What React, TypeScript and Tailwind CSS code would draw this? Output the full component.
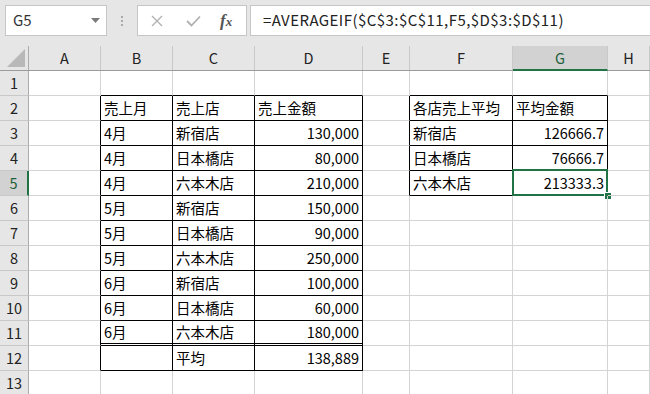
import clsx from "clsx";

const FONT = { fontFamily: '"Noto Sans CJK JP", "Noto Sans", sans-serif' };

// column widths including the right grid line
const COLS = [
  { key: "A", w: "w-[72px]" },
  { key: "B", w: "w-[72px]" },
  { key: "C", w: "w-[82px]" },
  { key: "D", w: "w-[108px]" },
  { key: "E", w: "w-[47px]" },
  { key: "F", w: "w-[103px]" },
  { key: "G", w: "w-[95px]" },
  { key: "H", w: "flex-1" },
];

type Cell = { v: string; right?: boolean };
const DATA: Record<number, Record<number, Cell>> = {
  2: { 1: { v: "売上月" }, 2: { v: "売上店" }, 3: { v: "売上金額" }, 5: { v: "各店売上平均" }, 6: { v: "平均金額" } },
  3: { 1: { v: "4月" }, 2: { v: "新宿店" }, 3: { v: "130,000", right: true }, 5: { v: "新宿店" }, 6: { v: "126666.7", right: true } },
  4: { 1: { v: "4月" }, 2: { v: "日本橋店" }, 3: { v: "80,000", right: true }, 5: { v: "日本橋店" }, 6: { v: "76666.7", right: true } },
  5: { 1: { v: "4月" }, 2: { v: "六本木店" }, 3: { v: "210,000", right: true }, 5: { v: "六本木店" }, 6: { v: "213333.3", right: true } },
  6: { 1: { v: "5月" }, 2: { v: "新宿店" }, 3: { v: "150,000", right: true } },
  7: { 1: { v: "5月" }, 2: { v: "日本橋店" }, 3: { v: "90,000", right: true } },
  8: { 1: { v: "5月" }, 2: { v: "六本木店" }, 3: { v: "250,000", right: true } },
  9: { 1: { v: "6月" }, 2: { v: "新宿店" }, 3: { v: "100,000", right: true } },
  10: { 1: { v: "6月" }, 2: { v: "日本橋店" }, 3: { v: "60,000", right: true } },
  11: { 1: { v: "6月" }, 2: { v: "六本木店" }, 3: { v: "180,000", right: true } },
  12: { 2: { v: "平均" }, 3: { v: "138,889", right: true } },
};

const inTable = (r: number, c: number) =>
  (c >= 1 && c <= 3 && r >= 2 && r <= 12) || (c >= 5 && c <= 6 && r >= 2 && r <= 5);

function Toolbar() {
  return (
    <div className="h-[46px] flex items-start pt-[5px] bg-[#e6e6e6]">
      {/* name box */}
      <div className="ml-[5px] w-[102px] h-[31px] bg-white border border-[#c6c6c6] flex items-center justify-between pl-[7px] pr-[6px]">
        <span className="text-[15px] text-[#333]">G5</span>
        <svg width="9" height="5" viewBox="0 0 9 5">
          <path d="M0 0h9L4.5 5z" fill="#7a7a7a" />
        </svg>
      </div>
      <div className="w-[30px] h-[31px] flex flex-col items-center justify-center gap-[2px]">
        <span className="w-[2px] h-[2px] bg-[#aaa]" />
        <span className="w-[2px] h-[2px] bg-[#aaa]" />
        <span className="w-[2px] h-[2px] bg-[#aaa]" />
      </div>
      {/* × ✓ fx */}
      <div className="w-[110px] h-[31px] bg-white border border-[#c6c6c6] flex items-center">
        <svg width="12" height="12" viewBox="0 0 12 12" className="ml-[13px]">
          <path d="M1 1l10 10M11 1L1 11" stroke="#b0b0b0" strokeWidth="1.3" />
        </svg>
        <svg width="15" height="12" viewBox="0 0 15 12" className="ml-[23px]">
          <path d="M1 6l4.5 4.5L14 1.5" stroke="#b0b0b0" strokeWidth="1.8" fill="none" />
        </svg>
        <span
          className="ml-[19px] text-[17px] italic font-bold text-[#555] leading-none"
          style={{ fontFamily: '"Liberation Serif", serif' }}
        >
          f<span className="text-[13px]">x</span>
        </span>
      </div>
      {/* formula bar */}
      <div className="ml-[3px] flex-1 h-[31px] bg-white border border-[#c6c6c6] border-r-0 flex items-center pl-[12px]">
        <span className="text-[15px] text-[#222] tracking-[0.45px]">=AVERAGEIF($C$3:$C$11,F5,$D$3:$D$11)</span>
      </div>
    </div>
  );
}

function HeaderRow() {
  return (
    <div className="flex h-[25px] bg-[#e6e6e6] border-b border-b-[#9b9b9b]">
      <div className="w-[29px] border-r border-r-[#ababab] relative overflow-hidden">
        <svg width="20" height="20" viewBox="0 0 20 20" className="absolute right-[3px] bottom-[3px]">
          <path d="M20 2V20H2z" fill="#b8b8b8" />
        </svg>
      </div>
      {COLS.map((col) => (
        <div
          key={col.key}
          className={clsx(
            col.w,
            "flex items-center justify-center text-[14.5px] border-r border-r-[#c8c8c8]",
            col.key === "G"
              ? "bg-[#d2d2d2] text-[#1f5f3b] border-b-2 border-b-[#217346] -mb-px"
              : "text-[#222]"
          )}
        >
          {col.key}
        </div>
      ))}
    </div>
  );
}

function Row({ r }: { r: number }) {
  const sel = r === 5;
  return (
    <div className="flex h-[25px]">
      <div
        className={clsx(
          "w-[29px] flex items-center justify-center text-[14.5px] border-b border-b-[#c8c8c8]",
          sel
            ? "bg-[#d2d2d2] text-[#1f5f3b] border-r-2 border-r-[#217346]"
            : "bg-[#e6e6e6] text-[#222] border-r border-r-[#ababab]"
        )}
      >
        {r}
      </div>
      {COLS.map((col, c) => {
        const cell = DATA[r]?.[c];
        const rightBlack = inTable(r, c) || inTable(r, c + 1);
        const bottomBlack = inTable(r, c) || inTable(r + 1, c);
        const dbl = r === 11 && c >= 1 && c <= 3;
        return (
          <div
            key={col.key}
            className={clsx(
              col.w,
              "relative flex items-center px-[3px] text-[14.5px] text-black whitespace-nowrap border-r",
              cell?.right ? "justify-end" : "justify-start",
              rightBlack ? "border-r-black" : "border-r-[#d4d4d4]",
              dbl
                ? "border-b-[3px] border-double border-b-black"
                : bottomBlack
                ? "border-b border-b-black"
                : "border-b border-b-[#d4d4d4]"
            )}
          >
            {cell?.v}
            {sel && col.key === "G" && (
              <div className="absolute left-[-1px] top-[-2px] right-[-1px] bottom-[-1px] border-2 border-[#217346] pointer-events-none">
                <div className="absolute right-[-5px] bottom-[-5px] w-[7px] h-[7px] bg-[#217346] border-l border-t border-white" />
              </div>
            )}
          </div>
        );
      })}
    </div>
  );
}

export default function App() {
  const rows = Array.from({ length: 13 }, (_, i) => i + 1);
  return (
    <div className="w-[650px] h-[394px] overflow-hidden bg-white" style={FONT}>
      <Toolbar />
      <HeaderRow />
      {rows.map((r) => (
        <Row key={r} r={r} />
      ))}
    </div>
  );
}
